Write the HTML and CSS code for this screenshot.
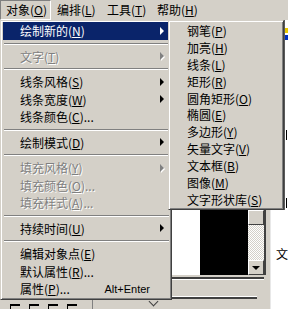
FILE: index.html
```
<!DOCTYPE html>
<html lang="zh">
<head>
<meta charset="utf-8">
<link rel="stylesheet" href="styles.css">
<title>对象菜单</title>
</head>
<body>
<div class="menubar">
	<div class="mb-item down">对象(<u>O</u>)</div>
	<div class="mb-item">编排(<u>L</u>)</div>
	<div class="mb-item">工具(<u>T</u>)</div>
	<div class="mb-item">帮助(<u>H</u>)</div>
</div>

<div class="work">
	<div class="tools">
		<div class="tools-foot">
			<span class="stub"></span><span class="stub"></span><span class="stub"></span><span class="stub"></span>
			<span class="vline"></span>
			<span class="notch"></span>
		</div>
	</div>
	<div class="hidden-pane"></div>
	<div class="side-top">
		<div class="side-gray"></div>
		<div class="side-rule"></div>
		<div class="side-bits">
			<span class="bit yellow"></span>
			<span class="bit blue"></span>
			<span class="stroke s1"></span>
			<span class="stroke s2"></span>
		</div>
	</div>
	<div class="preview">
		<div class="pv-white"></div>
		<div class="pv-black"></div>
		<div class="pv-scroll">
			<div class="sb-btn"></div>
			<div class="sb-track"></div>
			<div class="sb-btn"><i class="down-arr"></i></div>
		</div>
		<div class="pv-rim"></div>
	</div>
	<div class="side-text">文</div>
	<div class="panel-foot">
		<div class="rule one"></div>
		<div class="rule two"></div>
	</div>
	<div class="panel-base"></div>
</div>

<!-- 主菜单 -->
<div class="menu main">
	<div class="mi hot"><span class="lbl">绘制新的(<u>N</u>)</span><i class="arr"></i></div>
	<div class="sep"></div>
	<div class="mi off"><span class="lbl">文字(<u>T</u>)</span><i class="arr"></i></div>
	<div class="sep"></div>
	<div class="mi"><span class="lbl">线条风格(<u>S</u>)</span><i class="arr"></i></div>
	<div class="mi"><span class="lbl">线条宽度(<u>W</u>)</span><i class="arr"></i></div>
	<div class="mi"><span class="lbl">线条颜色(<u>C</u>)...</span></div>
	<div class="sep"></div>
	<div class="mi"><span class="lbl">绘制模式(<u>D</u>)</span><i class="arr"></i></div>
	<div class="sep"></div>
	<div class="mi off"><span class="lbl">填充风格(<u>Y</u>)</span><i class="arr"></i></div>
	<div class="mi off"><span class="lbl">填充颜色(<u>O</u>)...</span></div>
	<div class="mi off"><span class="lbl">填充样式(<u>A</u>)...</span></div>
	<div class="sep"></div>
	<div class="mi"><span class="lbl">持续时间(<u>U</u>)</span><i class="arr"></i></div>
	<div class="sep"></div>
	<div class="mi"><span class="lbl">编辑对象点(<u>E</u>)</span></div>
	<div class="mi"><span class="lbl">默认属性(<u>R</u>)...</span></div>
	<div class="mi"><span class="lbl">属性(<u>P</u>)...</span><span class="key">Alt+Enter</span></div>
</div>

<!-- 子菜单 -->
<div class="menu sub">
	<div class="si">钢笔(<u>P</u>)</div>
	<div class="si">加亮(<u>H</u>)</div>
	<div class="si">线条(<u>L</u>)</div>
	<div class="si">矩形(<u>R</u>)</div>
	<div class="si">圆角矩形(<u>O</u>)</div>
	<div class="si">椭圆(<u>E</u>)</div>
	<div class="si">多边形(<u>Y</u>)</div>
	<div class="si">矢量文字(<u>V</u>)</div>
	<div class="si">文本框(<u>B</u>)</div>
	<div class="si">图像(<u>M</u>)</div>
	<div class="si">文字形状库(<u>S</u>)</div>
</div>
</body>
</html>
```
FILE: styles.css
```
body{margin:0;width:288px;height:309px;overflow:hidden;position:relative;background:#d4d0c8;font-family:"Noto Sans CJK SC","Liberation Sans",sans-serif;font-size:12px;color:#000;}
u{text-decoration:underline;text-underline-offset:1px;}

/* menu bar */
.menubar{display:flex;height:20px;}
.mb-item{width:50px;box-sizing:border-box;padding-left:6px;line-height:20px;height:20px;}
.mb-item.down{width:51px;border-top:1px solid #808080;border-left:1px solid #808080;border-right:1px solid #fff;border-bottom:1px solid #fff;padding-left:5px;line-height:18px;}

/* app area behind the menus */
.work{display:grid;grid-template-columns:172px 98px 18px;grid-template-rows:190px 65px 25px 9px;height:289px;}
.tools{grid-column:1;grid-row:1 / 5;display:flex;flex-direction:column;justify-content:flex-end;}
.tools-foot{height:9px;display:flex;align-items:flex-start;padding-left:10px;gap:9px;}
.stub{width:9px;height:3px;margin-top:4px;border-top:2px solid #000;border-left:1px solid #000;}
.vline{width:1px;height:9px;background:#808080;margin-left:6px;}
.notch{width:6px;height:6px;margin-left:48px;border-right:1px solid #404040;border-bottom:1px solid #404040;transform:rotate(45deg);margin-top:-2px;}
.hidden-pane{grid-column:2;grid-row:1;}
.side-top{grid-column:3;grid-row:1;display:flex;}
.side-gray{width:13px;}
.side-rule{width:2px;background:#5a5a5a;}
.side-bits{flex:1;background:#fff;display:flex;flex-direction:column;}
.bit{display:block;height:5px;}
.bit.yellow{background:#e8c800;margin-top:8px;}
.bit.blue{background:#0030c0;margin-top:2px;}
.stroke{display:block;width:1px;background:#000;margin-left:1px;}
.s1{height:10px;margin-top:90px;}
.s2{height:10px;margin-top:58px;}

.preview{grid-column:2;grid-row:2;display:flex;}
.pv-white{width:28px;background:#fff;}
.pv-black{width:48px;background:#000;}
.pv-scroll{width:16px;display:flex;flex-direction:column;}
.sb-btn{height:15px;box-sizing:border-box;background:#d4d0c8;border:1px solid;border-color:#fff #404040 #404040 #fff;display:flex;align-items:center;justify-content:center;}
.sb-track{flex:1;background-color:#fff;background-image:repeating-conic-gradient(#d4d0c8 0 25%,#fff 0 50%);background-size:2px 2px;}
.down-arr{width:0;height:0;border-top:4px solid #000;border-left:4px solid transparent;border-right:4px solid transparent;}
.pv-rim{width:6px;border-left:2px solid #404040;box-sizing:border-box;}
.side-text{grid-column:3;grid-row:2 / 5;background:#fff;border-left:1px solid #e8e8e8;padding:37px 0 0 5px;line-height:14px;}
.panel-foot{grid-column:2;grid-row:3;display:flex;flex-direction:column;}
.rule{height:0;border-top:2px solid #404040;border-bottom:1px solid #fff;}
.rule.one{margin-top:2px;width:92px;}
.rule.two{margin-top:16px;width:85px;border-top:1px solid #fff;border-bottom:2px solid #404040;}
.panel-base{grid-column:2;grid-row:4;}

/* popup menus */
.menu{position:absolute;top:20px;box-sizing:border-box;border:1px solid;border-color:#d4d0c8 #404040 #404040 #d4d0c8;box-shadow:inset 1px 1px #fff,inset -1px -1px #808080;background:#d4d0c8;}
.menu.main{left:0;width:172px;padding:1px 2px;}
.menu.sub{left:168px;width:116px;height:190px;padding:1px 2px;}
.mi{display:flex;align-items:center;height:17.5px;padding:0 5px 0 17px;white-space:nowrap;}
.lbl{flex:1;}
.arr{width:0;height:0;border-left:4px solid currentColor;border-top:4px solid transparent;border-bottom:4px solid transparent;}
.hot{background:#0a246a;color:#fff;}
.off{color:#808080;text-shadow:1px 1px 0 #fff;}
.off .arr{filter:drop-shadow(1px 1px 0 #fff);}
.key{font-family:"Liberation Sans",sans-serif;font-size:11px;margin-right:14px;}
.sep{margin:3px 0 3px 1px;border-top:1px solid #808080;border-bottom:1px solid #fff;}
.si{height:16.9px;display:flex;align-items:center;padding-left:16px;white-space:nowrap;}
```
